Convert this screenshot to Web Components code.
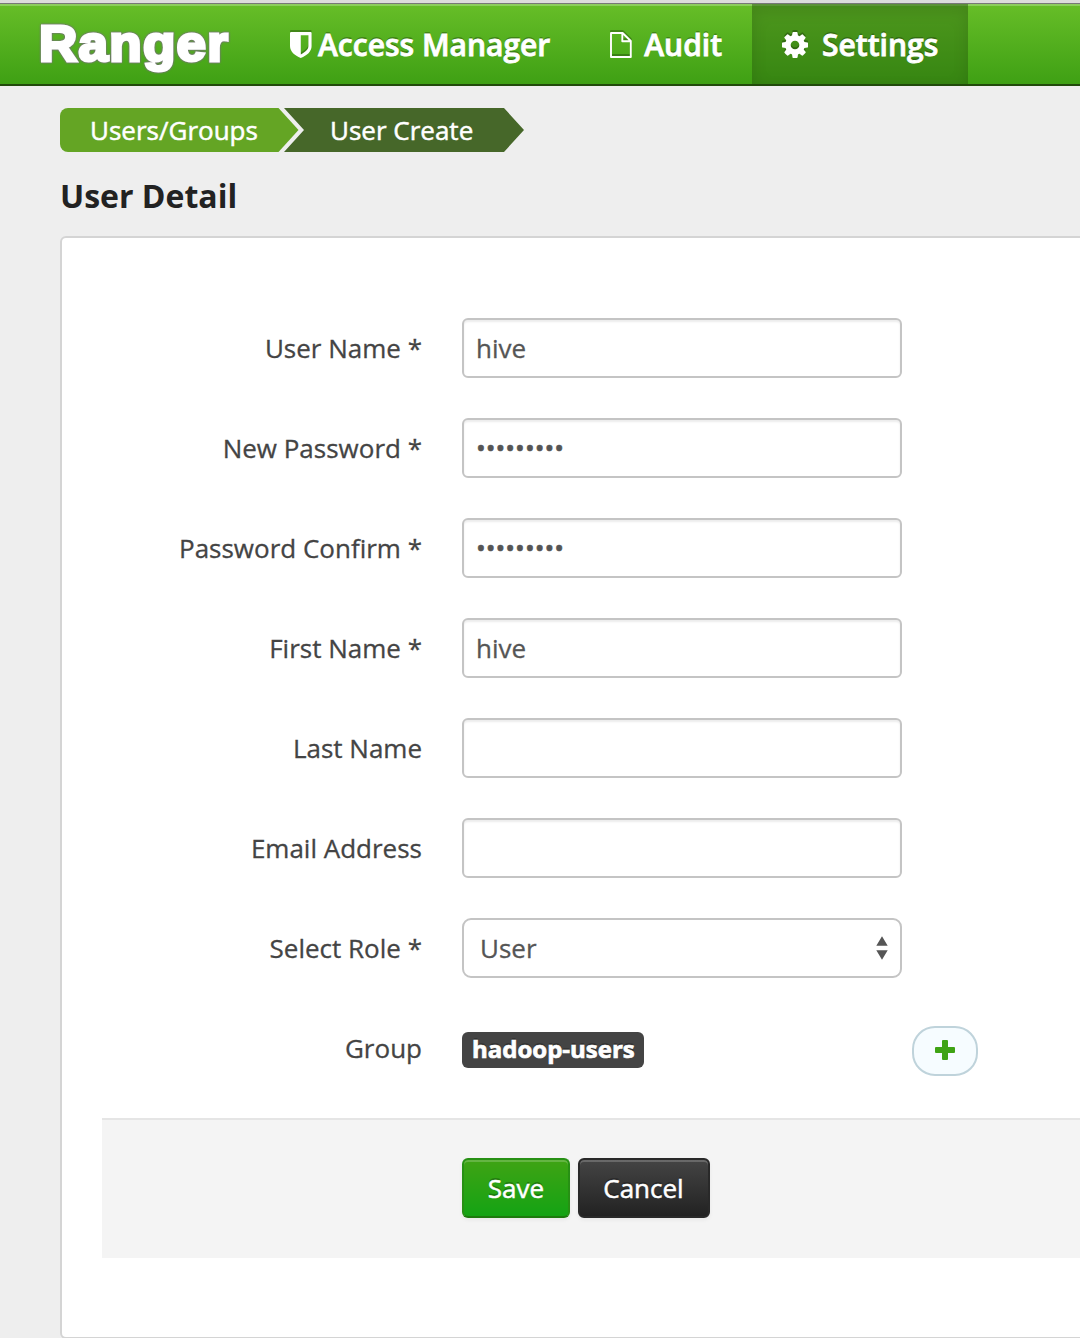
<!DOCTYPE html>
<html lang="en">
<head>
<meta charset="utf-8">
<title>Ranger</title>
<style>
html,body{margin:0;height:1338px;overflow:hidden;background:#eee}
body{font-family:"Open Sans","Noto Sans",sans-serif;font-size:26px;color:#444}
</style>
</head>
<body>
<ranger-page></ranger-page>
<script>
const define=(name,html,init)=>customElements.define(name,class extends HTMLElement{
  connectedCallback(){
    if(this.shadowRoot)return;
    const t=document.createElement('template');
    t.innerHTML=html;
    this.attachShadow({mode:'open'}).append(t.content.cloneNode(true));
    if(init)init(this,this.shadowRoot);
  }
});

const ICONS={
  shield:'<svg width="22" height="26" viewBox="0 0 22 26"><path fill="#fff" fill-rule="evenodd" d="M1.200 0H20.600Q21.600 0 21.600 1V14C21.600 19.500 17 23.500 10.800 26C4.600 23.500 0 19.500 0 14V1Q0 0 1.200 0ZM10.800 3.200V22.400C15.500 20 18.400 17.500 18.400 14V3.200Z"/></svg>',
  file:'<svg width="22" height="26" viewBox="0 0 22 26"><path fill="none" stroke="#fff" stroke-width="1.900" stroke-linejoin="round" d="M1 1H12.600L20.800 9V25H1ZM12.300 1V9.200H20.800"/></svg>',
  cog:'<svg width="26" height="26" viewBox="128 128 1536 1536"><path fill="#fff" d="M1152 896q0-106-75-181t-181-75-181 75-75 181 75 181 181 75 181-75 75-181zm512-109v222q0 12-8 23t-20 13l-185 28q-19 54-39 91 35 50 107 138 10 12 10 25t-9 23q-27 37-99 108t-94 71q-12 0-26-9l-138-108q-44 23-91 38-16 136-29 186-7 28-36 28h-222q-14 0-24.500-8.500t-11.500-21.500l-28-184q-49-16-90-37l-141 107q-10 9-25 9-14 0-25-11-126-114-165-168-7-10-7-23 0-12 8-23 15-21 51-66.500t54-70.500q-27-50-41-99l-183-27q-13-2-21-12.500t-8-23.500v-222q0-12 8-23t19-13l186-28q14-46 39-92-40-57-107-138-10-12-10-24 0-10 9-23 26-36 98.500-107.500t94.500-71.500q13 0 26 10l138 107q44-23 91-38 16-136 29-186 7-28 36-28h222q14 0 24.500 8.500t11.500 21.500l28 184q49 16 90 37l142-107q9-9 24-9 13 0 25 10 129 119 165 170 7 8 7 22 0 12-8 23-15 21-51 66.500t-54 70.500q26 50 41 98l183 28q13 2 21 12.500t8 23.500z"/></svg>',
  plus:'<svg width="20" height="20" viewBox="0 0 20 20"><path fill="#3fa314" d="M8 0H12Q13 0 13 1V7H19Q20 7 20 8V12Q20 13 19 13H13V19Q13 20 12 20H8Q7 20 7 19V13H1Q0 13 0 12V8Q0 7 1 7H7V1Q7 0 8 0Z"/></svg>'
};

define('ranger-icon','<style>:host{display:block;line-height:0}svg{display:block}</style><i></i>',
  (el,r)=>{r.querySelector('i').innerHTML=ICONS[el.getAttribute('name')]});

define('ranger-logo',`<style>
:host{display:block;width:178px;font:bold 50px/60px "Liberation Sans",Arial,sans-serif;letter-spacing:1.200px;color:#fff;-webkit-text-stroke:3px #fff;paint-order:stroke fill;transform:scaleX(1.060);transform-origin:0 0;
filter:drop-shadow(0 0 .8px #666) drop-shadow(0 0 .5px #888)}
</style><span><slot></slot></span>`);

define('ranger-nav-item',`<style>
:host{display:flex;align-items:center;box-sizing:border-box;height:80px;padding:2px 30px 0;color:#fff;font-size:30px;font-weight:600;-webkit-text-stroke:.8px #fff;line-height:40px;white-space:nowrap;text-shadow:0 -2px 0 rgba(0,0,0,.25)}
:host([active]){background:rgba(43,95,15,.4);box-shadow:inset 0 6px 16px rgba(0,0,0,.125)}
ranger-icon{filter:drop-shadow(0 -2px 0 rgba(0,0,0,.25));margin-right:var(--gap,12px)}
</style><ranger-icon></ranger-icon><span><slot></slot></span>`,
  (el,r)=>r.querySelector('ranger-icon').replaceWith(Object.assign(document.createElement('template'),{innerHTML:`<ranger-icon name="${el.getAttribute('icon')}"></ranger-icon>`}).content));

define('ranger-navbar',`<style>
:host{display:flex;box-sizing:border-box;height:86px;border-top:3px solid #dcdcdc;border-bottom:2px solid #214a0b;background:linear-gradient(#67be28,#3fa014)}
.bar{display:flex;flex:1;box-sizing:border-box;border-top:1px solid #777;box-shadow:inset 0 2px 0 rgba(255,255,255,.25)}
.brand{box-sizing:border-box;width:260px;padding:10px 0 0 39px}
</style><div class="bar"><div class="brand"><slot name="brand"></slot></div><slot></slot></div>`);

define('ranger-crumb',`<style>
:host{display:flex;align-items:center;box-sizing:border-box;height:44px;color:#fff;font-size:26px;white-space:nowrap;-webkit-text-stroke:.5px #fff}
:host([first]){width:239px;padding-left:30px;background:#64a524;border-radius:8px 0 0 8px;clip-path:polygon(0 0,218.500px 0,238.500px 50%,218.500px 100%,0 100%)}
:host([current]){width:240px;margin-left:-15px;padding-left:46px;background:#466729;clip-path:polygon(0 0,220px 0,240px 50%,220px 100%,0 100%,20px 50%)}
</style><span><slot></slot></span>`);

define('ranger-breadcrumbs',`<style>:host{display:flex;padding:22px 0 0 60px}</style><slot></slot>`);

define('ranger-title',`<style>:host{display:block;padding:22px 0 0 60px;height:62px;font-size:32px;line-height:44px;font-weight:700;color:#222}</style><span><slot></slot></span>`);

define('ranger-panel',`<style>
:host{display:block;box-sizing:border-box;width:1060px;height:1103px;margin-left:60px;border:2px solid #d4d4d4;border-radius:6px;background:#fff;padding:80px 0 0 40px}
</style><slot></slot>`);

define('ranger-field',`<style>
:host{display:flex;align-items:center;height:60px;margin-bottom:40px;-webkit-text-stroke:.3px currentColor}
label{width:320px;margin-right:40px;text-align:right;line-height:40px;white-space:nowrap}
</style><label><span></span></label><slot></slot>`,
  (el,r)=>{r.querySelector('span').textContent=el.getAttribute('label')});

define('ranger-input',`<style>
:host{display:flex;align-items:center;box-sizing:border-box;width:440px;height:60px;padding:0 12px;border:2px solid #c4c4c4;border-radius:6px;background:#fff;color:#555;box-shadow:inset 0 2px 2px rgba(0,0,0,.075)}
:host([secret]){padding-bottom:2px;-webkit-text-stroke:.6px #555}
</style><span><slot></slot></span>`);

define('ranger-select',`<style>
:host{display:flex;align-items:center;justify-content:space-between;box-sizing:border-box;width:440px;height:60px;padding:0 12px 0 16px;border:2px solid #c4c4c4;border-radius:9px;background:#fff;color:#555}
svg{display:block}
</style><span><slot></slot></span><svg width="12" height="24" viewBox="0 0 12 24"><path fill="#555" d="M6 .3L11.700 9.800H.3ZM.3 14.200H11.700L6 23.700Z"/></svg>`);

define('ranger-badge',`<style>
:host{display:flex;align-items:center;box-sizing:border-box;width:182px;height:36px;margin-top:4px;padding:0 10px 2px;border-radius:6px;background:#444;color:#fff;font-size:24px;font-weight:700;-webkit-text-stroke:.7px #fff;line-height:28px;text-shadow:0 -2px 0 rgba(0,0,0,.25);white-space:nowrap}
</style><span><slot></slot></span>`);

define('ranger-add',`<style>
:host{display:flex;align-items:center;justify-content:center;box-sizing:border-box;width:66px;height:50px;margin:6px 0 0 268px;border:2px solid #bfd3db;border-radius:23px;background:#f6fcff}
ranger-icon{margin-top:-2px}
</style><ranger-icon name="plus"></ranger-icon>`);

define('ranger-actions',`<style>
:host{display:flex;gap:8px;box-sizing:border-box;height:140px;padding:38px 0 0 360px;border-top:2px solid #e5e5e5;background:#f4f4f4}
</style><slot></slot>`);

define('ranger-button',`<style>
:host{display:flex;align-items:center;justify-content:center;box-sizing:border-box;width:132px;height:60px;padding-right:1px;border:2px solid #292929;border-radius:6px;background:linear-gradient(#444,#222);color:#fff;text-shadow:0 -2px 0 rgba(0,0,0,.25);-webkit-text-stroke:.5px #fff;box-shadow:inset 0 2px 0 rgba(255,255,255,.2),0 2px 4px rgba(0,0,0,.05)}
:host([primary]){width:108px;padding-right:0;border-color:#279014;border-bottom-color:#1d7a0d;background:linear-gradient(#3fa314,#14a314)}
</style><span><slot></slot></span>`);

define('ranger-page',`<style>:host{display:block}</style>
<ranger-navbar><ranger-logo slot="brand">Ranger</ranger-logo>
<ranger-nav-item icon="shield" style="--gap:6px">Access Manager</ranger-nav-item>
<ranger-nav-item icon="file">Audit</ranger-nav-item>
<ranger-nav-item icon="cog" active style="--gap:14px">Settings</ranger-nav-item></ranger-navbar>
<ranger-breadcrumbs><ranger-crumb first>Users/Groups</ranger-crumb><ranger-crumb current>User Create</ranger-crumb></ranger-breadcrumbs>
<ranger-title>User Detail</ranger-title>
<ranger-panel>
<ranger-field label="User Name *"><ranger-input>hive</ranger-input></ranger-field>
<ranger-field label="New Password *"><ranger-input secret>•••••••••</ranger-input></ranger-field>
<ranger-field label="Password Confirm *"><ranger-input secret>•••••••••</ranger-input></ranger-field>
<ranger-field label="First Name *"><ranger-input>hive</ranger-input></ranger-field>
<ranger-field label="Last Name"><ranger-input></ranger-input></ranger-field>
<ranger-field label="Email Address"><ranger-input></ranger-input></ranger-field>
<ranger-field label="Select Role *"><ranger-select>User</ranger-select></ranger-field>
<ranger-field label="Group"><ranger-badge>hadoop-users</ranger-badge><ranger-add></ranger-add></ranger-field>
<ranger-actions><ranger-button primary>Save</ranger-button><ranger-button>Cancel</ranger-button></ranger-actions>
</ranger-panel>`);
</script>
</body>
</html>
